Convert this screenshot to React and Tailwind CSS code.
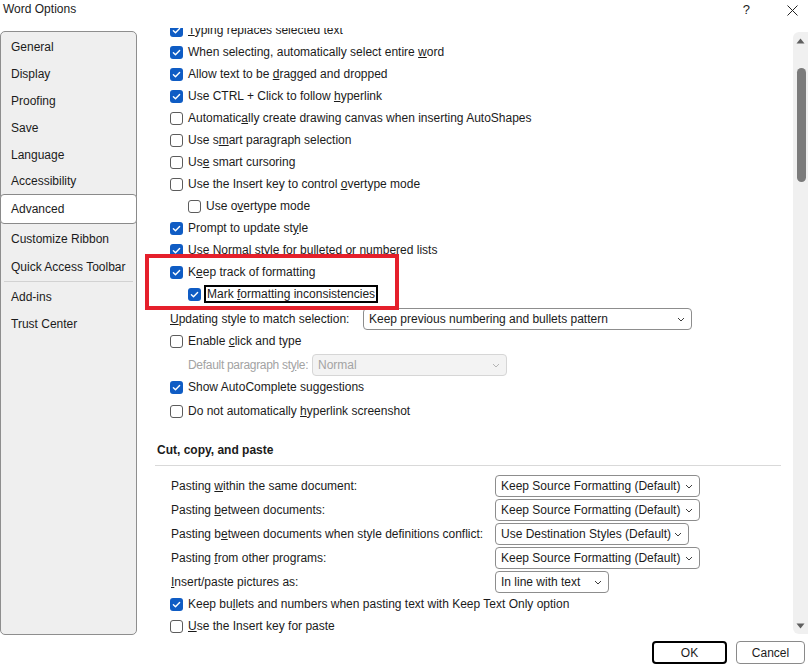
import React from 'react';

const FONT = { fontFamily: '"Liberation Sans", Arial, sans-serif' };

function Check({ checked }) {
  if (checked) {
    return (
      <span className="flex h-[13px] w-[13px] shrink-0 items-center justify-center rounded-[3px] bg-[#0f5cc4]">
        <svg width="13" height="13" viewBox="0 0 13 13">
          <path d="M3.4 6.7 L5.5 8.7 L9.6 4.5" fill="none" stroke="#fff" strokeWidth="1.4" strokeLinecap="round" strokeLinejoin="round" />
        </svg>
      </span>
    );
  }
  return <span className="h-[13px] w-[13px] shrink-0 rounded-[3px] border border-[#5c5c5c] bg-white" />;
}

function Chevron({ color = '#3c3c3c' }) {
  return (
    <svg width="8" height="5" viewBox="0 0 8 5" className="shrink-0">
      <path d="M1 1 L4 4 L7 1" fill="none" stroke={color} strokeWidth="1" />
    </svg>
  );
}

function Select({ value, width, disabled }) {
  return (
    <div
      className={
        'flex h-[22px] shrink-0 items-center justify-between rounded-[4px] border pl-[5px] pr-[6px] ' +
        (disabled ? 'border-[#d6d6d6] bg-[#f3f3f3] text-[#a3a3a3]' : 'border-[#8d8d8d] bg-white text-[#1b1b1b]')
      }
      style={{ width }}
    >
      <span className="whitespace-nowrap">{value}</span>
      <Chevron color={disabled ? '#b5b5b5' : '#3c3c3c'} />
    </div>
  );
}

function Row({ checked, indent, className = '', children }) {
  return (
    <div className={'flex h-[22px] items-center gap-[5px] ' + (indent ? 'pl-[18px] ' : '') + className}>
      <Check checked={checked} />
      <span className="whitespace-nowrap">{children}</span>
    </div>
  );
}

function PasteRow({ label, value, width, className = '' }) {
  return (
    <div className={'flex h-[22px] items-center pl-[1px] ' + className}>
      <span className="w-[324px] whitespace-nowrap">{label}</span>
      <Select value={value} width={width} />
    </div>
  );
}

const NAV = [
  ['General', 'h-[27px]'],
  ['Display', 'h-[27px]'],
  ['Proofing', 'h-[27px]'],
  ['Save', 'h-[27px]'],
  ['Language', 'h-[27px]'],
  ['Accessibility', 'h-[26px]'],
  ['Advanced', 'h-[30px]', true],
  ['Customize Ribbon', 'h-[30px]'],
  ['Quick Access Toolbar', 'h-[26px]'],
  'sep',
  ['Add-ins', 'h-[27px]'],
  ['Trust Center', 'h-[28px]'],
];

export default function App() {
  return (
    <div className="relative flex h-[668px] w-[808px] flex-col overflow-hidden bg-white text-[12px] text-[#1b1b1b]" style={FONT}>
      {/* title bar */}
      <div className="flex h-[28px] shrink-0 items-start justify-between pt-[2px]">
        <span className="pl-[3px] leading-[15px]">Word Options</span>
        <div className="flex items-start">
          <span className="mr-[37px] leading-[15px] text-[13px]">?</span>
          <svg width="11" height="11" viewBox="0 0 11 11" className="mr-[10px] mt-[3px]">
            <path d="M0.5 0.5 L10.5 10.5 M10.5 0.5 L0.5 10.5" stroke="#222" strokeWidth="1" />
          </svg>
        </div>
      </div>

      {/* body */}
      <div className="flex h-[606px] shrink-0">
        {/* sidebar */}
        <div className="mt-[3px] flex h-[604px] w-[137px] shrink-0 flex-col rounded-[5px] border border-[#8e8e8e] bg-[#efefef] pt-[1px]">
          {NAV.map((item, i) => {
            if (item === 'sep') return <div key={i} className="mx-[3px] my-[1px] h-px bg-[#d2d2d2]" />;
            const [label, h, sel] = item;
            return (
              <div
                key={label}
                className={
                  'flex items-center pl-[10px] ' +
                  h +
                  (sel ? ' -mx-px rounded-[4px] border border-[#8a8a8a] bg-white' : '')
                }
              >
                {label}
              </div>
            );
          })}
        </div>

        {/* options panel */}
        <div className="relative flex-1 overflow-hidden">
          <div className="-mt-[9px] pl-[33px]">
            <Row checked><u>T</u>yping replaces selected text</Row>
            <Row checked>When selecting, automatically select entire <u>w</u>ord</Row>
            <Row checked>Allow text to be <u>d</u>ragged and dropped</Row>
            <Row checked>Use CTRL + Click to follow <u>h</u>yperlink</Row>
            <Row>Automatic<u>a</u>lly create drawing canvas when inserting AutoShapes</Row>
            <Row>Use s<u>m</u>art paragraph selection</Row>
            <Row>Us<u>e</u> smart cursoring</Row>
            <Row>Use the Insert key to control <u>o</u>vertype mode</Row>
            <Row indent>Use o<u>v</u>ertype mode</Row>
            <Row checked>Prompt to update st<u>y</u>le</Row>
            <Row checked>Use <u>N</u>ormal style for bulleted or numbered lists</Row>
            <Row checked>K<u>e</u>ep track of formatting</Row>
            <div className="flex h-[22px] items-center gap-[3px] pl-[18px]">
              <Check checked />
              <span className="whitespace-nowrap border-2 border-black px-px leading-[14px]">
                Mark <u>f</u>ormatting inconsistencies
              </span>
            </div>
            <div className="mt-[3px] flex h-[22px] items-center">
              <span className="w-[193px] whitespace-nowrap"><u>U</u>pdating style to match selection:</span>
              <Select value="Keep previous numbering and bullets pattern" width="329px" />
            </div>
            <Row>Enable <u>c</u>lick and type</Row>
            <div className="mt-[2px] flex h-[22px] items-center pl-[18px] text-[#a3a3a3]">
              <span className="w-[124px] whitespace-nowrap tracking-[-0.3px]">Default paragraph st<u>y</u>le:</span>
              <Select value="Normal" width="195px" disabled />
            </div>
            <Row checked>Show AutoComplete suggestions</Row>
            <Row className="mt-[2px]">Do not automatically <u>h</u>yperlink screenshot</Row>
          </div>

          <div className="pl-[18px] pr-[12px]">
            <div className="mt-[17px] flex h-[22px] items-center pl-[2px] font-bold">Cut, copy, and paste</div>
            <div className="mt-[4px] h-px bg-[#d9d9d9]" />
          </div>

          <div className="flex flex-col gap-[2px] pl-[33px] pt-[9px]">
            <PasteRow label={<>Pasting <u>w</u>ithin the same document:</>} value="Keep Source Formatting (Default)" width="205px" />
            <PasteRow label={<>Pasting <u>b</u>etween documents:</>} value="Keep Source Formatting (Default)" width="205px" />
            <PasteRow label={<>Pasting b<u>e</u>tween documents when style definitions conflict:</>} value="Use Destination Styles (Default)" width="194px" />
            <PasteRow label={<>Pasting <u>f</u>rom other programs:</>} value="Keep Source Formatting (Default)" width="205px" />
            <PasteRow label={<><u>I</u>nsert/paste pictures as:</>} value="In line with text" width="114px" />
          </div>
          <div className="pl-[33px]">
            <Row checked>Keep bu<u>l</u>lets and numbers when pasting text with Keep Text Only option</Row>
            <Row><u>U</u>se the Insert key for paste</Row>
          </div>
        </div>

        {/* scrollbar */}
        <div className="mt-[4px] flex h-[602px] w-[15px] shrink-0 flex-col items-center rounded-l-[6px] bg-[#f0f0f0] pt-[6px]">
          <svg width="9" height="6" viewBox="0 0 9 6">
            <path d="M4.5 0.5 L8.5 5.5 L0.5 5.5 Z" fill="#5f5f5f" />
          </svg>
          <div className="ml-[1px] mt-[24px] h-[114px] w-[9px] rounded-full bg-[#7b7b7b]" />
          <div className="flex-1" />
          <svg width="9" height="6" viewBox="0 0 9 6" className="mb-[5px]">
            <path d="M0.5 0.5 L8.5 0.5 L4.5 5.5 Z" fill="#5f5f5f" />
          </svg>
        </div>
      </div>

      {/* footer */}
      <div className="flex flex-1 items-start justify-end gap-[9px] pr-[3px] pt-[7px]">
        <button className="flex h-[23px] w-[75px] items-center justify-center rounded-[4px] border-2 border-black bg-white text-[#1b1b1b]">
          OK
        </button>
        <button className="flex h-[23px] w-[69px] items-center justify-center rounded-[4px] border border-[#8a8a8a] bg-white text-[#1b1b1b]">
          Cancel
        </button>
      </div>

      {/* red annotation box */}
      <div className="pointer-events-none absolute left-[145px] top-[254px] h-[56px] w-[254px] border-4 border-[#e5202b]" />
    </div>
  );
}
